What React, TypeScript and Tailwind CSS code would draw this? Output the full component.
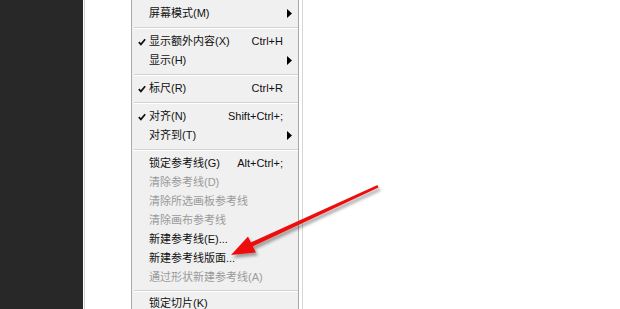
import React from 'react'

type Item =
  | { sep: true; short?: boolean }
  | {
      sep?: false
      label: string
      shortcut?: string
      check?: boolean
      sub?: boolean
      disabled?: boolean
    }

const items: Item[] = [
  { label: '屏幕模式(M)', sub: true },
  { sep: true },
  { label: '显示额外内容(X)', shortcut: 'Ctrl+H', check: true },
  { label: '显示(H)', sub: true },
  { sep: true },
  { label: '标尺(R)', shortcut: 'Ctrl+R', check: true },
  { sep: true },
  { label: '对齐(N)', shortcut: 'Shift+Ctrl+;', check: true },
  { label: '对齐到(T)', sub: true },
  { sep: true },
  { label: '锁定参考线(G)', shortcut: 'Alt+Ctrl+;' },
  { label: '清除参考线(D)', disabled: true },
  { label: '清除所选画板参考线', disabled: true },
  { label: '清除画布参考线', disabled: true },
  { label: '新建参考线(E)...' },
  { label: '新建参考线版面...' },
  { label: '通过形状新建参考线(A)', disabled: true },
  { sep: true, short: true },
  { label: '锁定切片(K)' },
]

function Check() {
  return (
    <svg width="8" height="8" viewBox="0 0 8 8" className="absolute left-[6px] top-[6px]">
      <path d="M0.8 4.2 L2.9 6.4 L7.2 1.2" fill="none" stroke="#111" strokeWidth="1.7" />
    </svg>
  )
}

function SubArrow() {
  return (
    <svg width="5" height="9" viewBox="0 0 5 9" className="absolute right-[6px] top-[5px]">
      <path d="M0 0 L5 4.5 L0 9 Z" fill="#000" />
    </svg>
  )
}

function Menu() {
  return (
    <div className="ml-[46px] w-[168px] h-full bg-[#f0f0f0] border-l border-r border-[#a9a9a9] pt-[4px] shadow-[3px_0_0_#ffffff,4px_0_0_#d8d8d8]">
      {items.map((it, i) =>
        it.sep ? (
          <div key={i} className={`${it.short ? 'h-[7px]' : 'h-[9px]'} flex items-center pl-[2px]`}>
            <div className="w-full border-t border-[#d2d2d2] border-b border-b-white" />
          </div>
        ) : (
          <div
            key={i}
            className={`relative h-[19px] flex items-center justify-between pl-[17px] pr-[15px] ${
              it.disabled ? 'text-[#9a9a9a]' : 'text-[#111]'
            }`}
          >
            {it.check && <Check />}
            <span>{it.label}</span>
            {it.shortcut && <span>{it.shortcut}</span>}
            {it.sub && <SubArrow />}
          </div>
        ),
      )}
    </div>
  )
}

function RedArrow() {
  return (
    <svg
      width="620"
      height="309"
      viewBox="0 0 620 309"
      className="absolute inset-0 pointer-events-none"
    >
      <defs>
        <filter id="sh" x="-20%" y="-20%" width="140%" height="140%">
          <feDropShadow dx="2" dy="3" stdDeviation="1.6" floodColor="#000" floodOpacity="0.35" />
        </filter>
      </defs>
      <g filter="url(#sh)" fill="#ee1111">
        <path d="M377.5 185 L378.5 187.5 L250.5 247.5 L248.5 243.5 Z" />
        <path d="M231 255 L248 236.5 L256 252.5 Z" />
      </g>
    </svg>
  )
}

export default function App() {
  return (
    <div
      className="relative w-[620px] h-[309px] overflow-hidden bg-white flex text-[11px]"
      style={{ fontFamily: '"Liberation Sans", "Noto Sans CJK SC", sans-serif' }}
    >
      <div className="w-[83px] h-full bg-[#282828] shrink-0" />
      <div className="w-px h-full bg-white shrink-0" />
      <div className="w-px h-full bg-[#cfcfcf] shrink-0" />
      <Menu />
      <RedArrow />
    </div>
  )
}
